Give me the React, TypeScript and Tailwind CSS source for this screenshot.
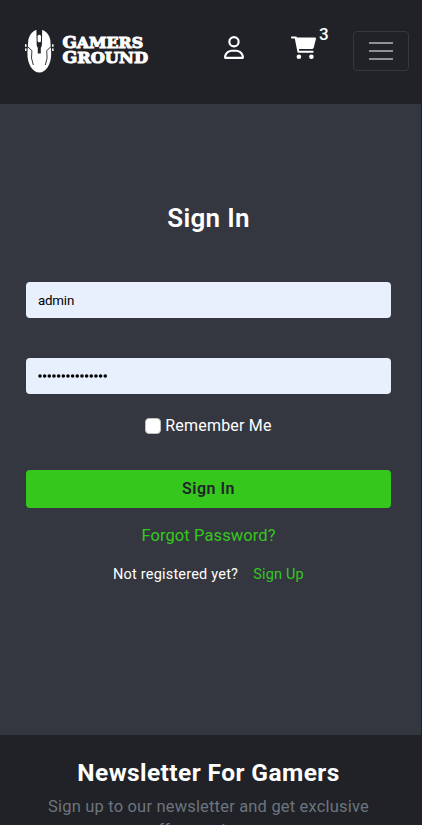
import { FaRegUser } from "react-icons/fa6";

function Logo() {
  return (
    <svg width="126" height="46" viewBox="0 0 126 46" aria-label="Gamers Ground">
      <path
        d="M15.3 1.6 C21 1.6 25 6 26.3 12 L26.8 19 L27.2 25 C27.4 36 22 44.6 15.3 44.6 C8.6 44.6 3.2 36 3.4 25 L3.8 19 L4.3 12 C5.6 6 9.6 1.6 15.3 1.6Z"
        fill="#fff"
      />
      <path d="M12.4 1 H18.2 L17.9 17.5 L16.8 20 V25.5 H13.8 V20 L12.7 17.5Z" fill="#212227" />
      <rect x="13.6" y="6.8" width="3.4" height="7.4" rx="1.5" fill="#fff" />
      <path
        d="M3 18.2 L7.9 22.6 L7.5 30 L9.3 37 M27.6 18.2 L22.7 22.6 L23.1 30 L21.3 37"
        fill="none"
        stroke="#212227"
        strokeWidth="0.9"
      />
      <g fill="#fff">
        <rect x="1" y="16.2" width="1.5" height="2.6" />
        <rect x="1" y="20.4" width="1.5" height="2.6" />
        <rect x="28.1" y="16.2" width="1.5" height="2.6" />
        <rect x="28.1" y="20.4" width="1.5" height="2.6" />
      </g>
      <g fill="#fff" stroke="#fff" strokeWidth="1" fontFamily="DejaVu Serif, serif" fontWeight="700">
        <text x="38.4" y="20.3" fontSize="16" textLength="80.8" lengthAdjust="spacingAndGlyphs">
          G<tspan fontSize="15">AMERS</tspan>
        </text>
        <text x="38.4" y="35.4" fontSize="16" textLength="85.6" lengthAdjust="spacingAndGlyphs">
          G<tspan fontSize="15">ROUND</tspan>
        </text>
      </g>
    </svg>
  );
}

function CartIcon() {
  return (
    <svg width="25" height="24" viewBox="0 0 25 24" fill="#fff">
      <path d="M0.6 0.5 H5 Q5.7 0.5 5.9 1.3 L6 1.6 H24.2 Q25.2 1.6 25 2.6 L22.8 11.6 Q22.5 12.9 21.2 12.9 H7.9 L8.2 14.8 H21.8 Q22.6 14.8 22.6 15.8 Q22.6 16.8 21.8 16.8 H7.6 Q6.6 16.8 6.4 15.8 L3.8 2.6 H0.6 Q0 2.6 0 1.6 Q0 0.5 0.6 0.5Z" />
      <circle cx="7.9" cy="20.8" r="2.3" />
      <circle cx="20.4" cy="20.8" r="2.3" />
    </svg>
  );
}

export default function App() {
  return (
    <div className="h-[825px] w-[422px] overflow-hidden bg-[#212227] font-['Roboto',sans-serif] text-white">
      <header className="flex h-[104px] items-start pl-6">
        <div className="mt-7">
          <Logo />
        </div>
        <FaRegUser className="mt-9 ml-[74px] h-[23px] w-[20px]" />
        <div className="mt-9 ml-[47px] flex">
          <CartIcon />
          <span className="-mt-[14px] ml-[3px] text-[17px]/6 font-medium">3</span>
        </div>
        <button className="mt-[31px] mr-[13px] ml-auto flex h-10 w-14 flex-col items-center justify-center gap-[6px] rounded border border-[#37383c]">
          <span className="h-0.5 w-6 bg-[#909193]" />
          <span className="h-0.5 w-6 bg-[#909193]" />
          <span className="h-0.5 w-6 bg-[#909193]" />
        </button>
      </header>
      <main className="mr-px flex h-[631px] flex-col bg-[#343740] pr-[30px] pl-[26px] text-center">
        <h1 className="mt-[99px] text-[26px]/[30px] font-semibold tracking-[0.3px]">Sign In</h1>
        <div className="mt-[49px] flex h-9 items-center rounded bg-[#e8f0fe] px-3 pt-px text-[13.33px] tracking-[-0.2px] text-black">
          admin
        </div>
        <div className="mt-10 flex h-9 items-center rounded bg-[#e8f0fe] px-3">
          <svg width="72" height="4" fill="#000">
            {Array.from({ length: 15 }, (_, i) => (
              <circle key={i} cx={2 + i * 4.66} cy="2" r="1.8" />
            ))}
          </svg>
        </div>
        <div className="mt-5 flex h-6 items-center justify-center gap-1 text-base/6">
          <span className="size-4 rounded-[4px] border border-[#bfbfbf] bg-white" />
          <span className="tracking-[0.2px]">Remember Me</span>
        </div>
        <button className="mt-8 h-[38px] rounded bg-[#36c71d] text-base font-semibold tracking-[0.5px] text-[#212529]">
          Sign In
        </button>
        <a className="mt-4 text-[16.5px]/6 tracking-[0.1px] text-[#36c71d]">Forgot Password?</a>
        <div className="mt-[15px] flex justify-center gap-[15px] text-[14.5px]/6 tracking-[0.2px]">
          <span>Not registered yet?</span>
          <a className="text-[#36c71d]">Sign Up</a>
        </div>
      </main>
      <footer className="mr-[5px] pt-[23px] text-center">
        <h2 className="text-[24.5px]/[30px] font-bold tracking-[0.42px]">Newsletter For Gamers</h2>
        <p className="mt-[7px] text-[16.5px]/6 tracking-[0.18px] text-[#6c757d]">
          Sign up to our newsletter and get exclusive
          <br />
          offers and more
        </p>
      </footer>
    </div>
  );
}
